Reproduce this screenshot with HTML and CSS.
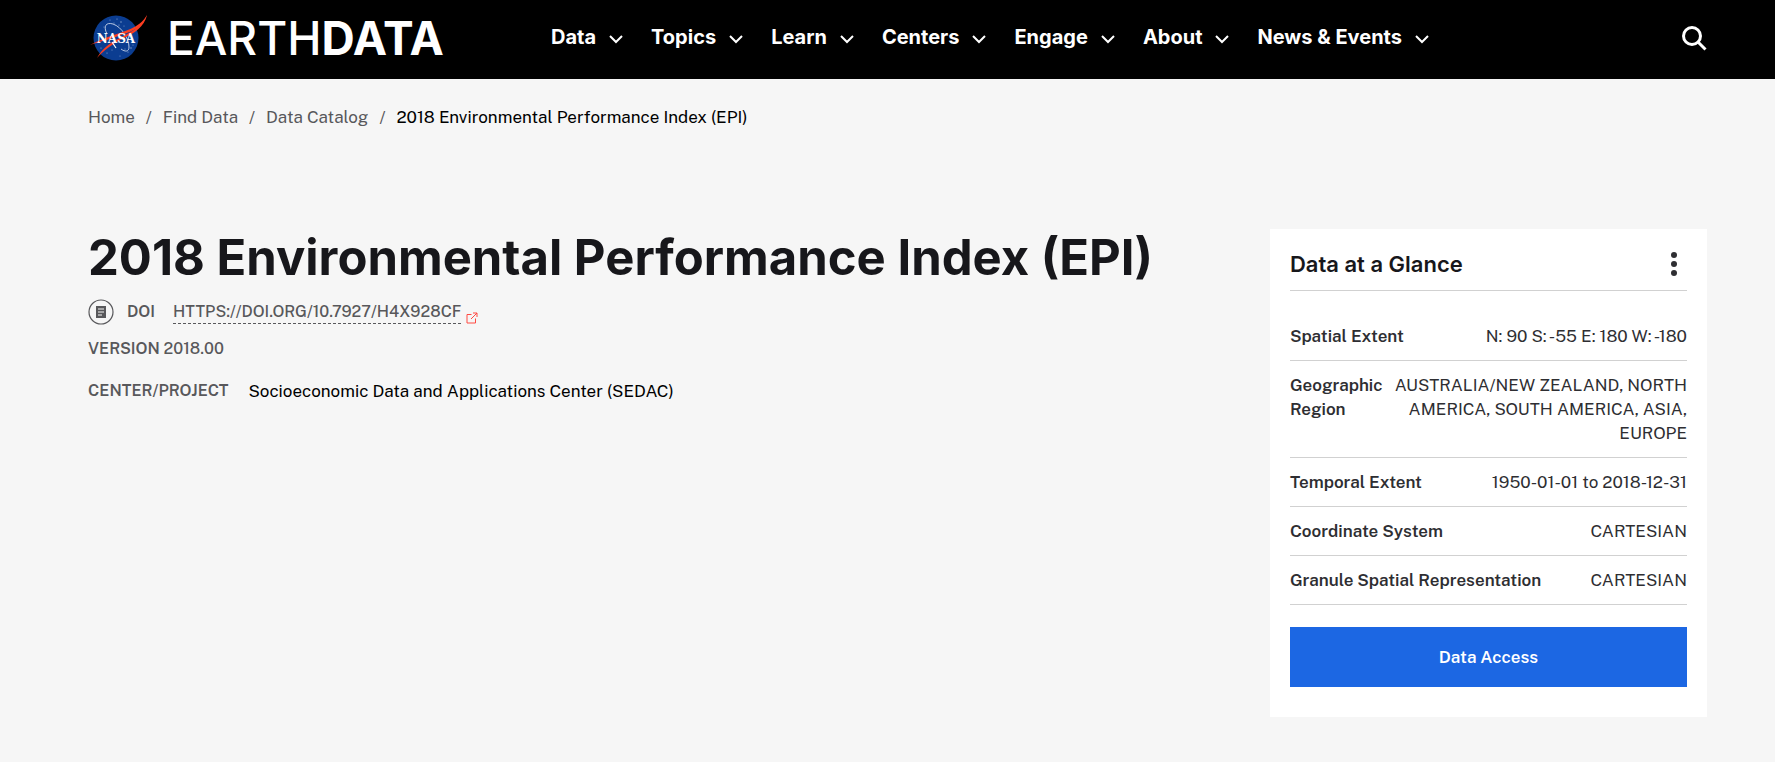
FILE: index.html
```html
<!DOCTYPE html>
<html lang="en">
<head>
  <meta charset="UTF-8">
  <meta name="viewport" content="width=device-width, initial-scale=1.0">
  <title>2018 Environmental Performance Index (EPI) | Earthdata</title>
  <link rel="stylesheet" href="styles.css">
</head>
<body>

<header class="site-header">
  <a class="brand" href="#" aria-label="NASA Earthdata home">
    <svg class="nasa-logo" viewBox="0 0 58 46" aria-hidden="true">
      <circle cx="26" cy="23" r="22.5" fill="#0b3d91"/>
      <g fill="#8fa9d6">
        <circle cx="27" cy="4" r=".6"/><circle cx="31" cy="7" r=".7"/><circle cx="24" cy="8" r=".5"/>
        <circle cx="29" cy="10" r=".6"/><circle cx="34" cy="11" r=".5"/><circle cx="20" cy="5" r=".5"/>
        <circle cx="11" cy="33" r=".6"/><circle cx="17" cy="38" r=".6"/><circle cx="41" cy="33" r=".7"/>
        <circle cx="38" cy="37" r=".6"/><circle cx="43" cy="30" r=".5"/><circle cx="30" cy="41" r=".5"/>
        <circle cx="35" cy="34" r=".5"/><circle cx="22" cy="35" r=".5"/><circle cx="14" cy="12" r=".5"/>
      </g>
      <path d="M17 19C13 11 16 7 23 9C32 12 39 24 39 32C39 37 35 37 31 34" fill="none" stroke="#dfe7f5" stroke-width=".8"/>
      <path d="M57 0C52 12 38 19 24 26C16 31 11 36 7 43C14 35 24 28 32 24C45 18 54 12 57 0Z" fill="#fc3d21"/>
      <path d="M57 0C49 14 34 16 18 22C11 25 5 27 0 30C9 27 21 24 31 20C44 16 54 11 57 0Z" fill="#fc3d21"/>
      <text class="nasa-text" x="26" y="28" text-anchor="middle">NASA</text>
      <path d="M22 27L26 33" stroke="#fff" stroke-width="1.2"/>
    </svg>
    <span class="brand-name">EARTH<b>DATA</b></span>
  </a>

  <nav class="main-nav" aria-label="Main">
    <button type="button">Data <svg class="chevron" viewBox="0 0 14 9"><path d="M1 1l6 6 6-6"/></svg></button>
    <button type="button">Topics <svg class="chevron" viewBox="0 0 14 9"><path d="M1 1l6 6 6-6"/></svg></button>
    <button type="button">Learn <svg class="chevron" viewBox="0 0 14 9"><path d="M1 1l6 6 6-6"/></svg></button>
    <button type="button">Centers <svg class="chevron" viewBox="0 0 14 9"><path d="M1 1l6 6 6-6"/></svg></button>
    <button type="button">Engage <svg class="chevron" viewBox="0 0 14 9"><path d="M1 1l6 6 6-6"/></svg></button>
    <button type="button">About <svg class="chevron" viewBox="0 0 14 9"><path d="M1 1l6 6 6-6"/></svg></button>
    <button type="button">News &amp; Events <svg class="chevron" viewBox="0 0 14 9"><path d="M1 1l6 6 6-6"/></svg></button>
  </nav>

  <button class="search-btn" type="button" aria-label="Search">
    <svg viewBox="0 0 25 25"><circle cx="10" cy="10" r="8.5"/><path d="M16 16l7.500 7.500"/></svg>
  </button>
</header>

<nav class="breadcrumb" aria-label="Breadcrumb">
  <ol>
    <li><a href="#">Home</a></li>
    <li><a href="#">Find Data</a></li>
    <li><a href="#">Data Catalog</a></li>
    <li aria-current="page">2018 Environmental Performance Index (EPI)</li>
  </ol>
</nav>

<main class="content">
  <section class="dataset">
    <h1>2018 Environmental Performance Index (EPI)</h1>

    <div class="doi">
      <svg class="doi-icon" viewBox="0 0 26 26" aria-hidden="true">
        <circle cx="13" cy="13" r="12" fill="none" stroke="#58585b" stroke-width="1.2"/>
        <path d="M8 7h10v12H8z" fill="#58585b"/>
        <path d="M10 10h6M10 13h6M10 16h4" stroke="#f6f6f6"/>
      </svg>
      <span class="label">DOI</span>
      <a class="doi-link" href="#">
        <span class="doi-url">HTTPS://DOI.ORG/10.7927/H4X928CF</span>
        <svg class="external" viewBox="0 0 12 12" aria-hidden="true"><path d="M5.500 2.500H1v8.500h8.500V6.500M7 1h4v4M11 1L5 7"/></svg>
      </a>
    </div>

    <p class="version"><span class="label">VERSION</span> 2018.00</p>

    <div class="center-project">
      <span class="label">CENTER/PROJECT</span>
      <span class="center-name">Socioeconomic Data and Applications Center (SEDAC)</span>
    </div>
  </section>

  <aside class="glance">
    <div class="glance-header">
      <h2>Data at a Glance</h2>
      <button class="more-btn" type="button" aria-label="More options">
        <svg viewBox="0 0 6 24"><circle cx="3" cy="3" r="3"/><circle cx="3" cy="12" r="3"/><circle cx="3" cy="21" r="3"/></svg>
      </button>
    </div>

    <dl>
      <div class="row"><dt>Spatial Extent</dt><dd>N: 90 S: -55 E: 180 W: -180</dd></div>
      <div class="row"><dt>Geographic Region</dt><dd>AUSTRALIA/NEW ZEALAND, NORTH AMERICA, SOUTH AMERICA, ASIA, EUROPE</dd></div>
      <div class="row"><dt>Temporal Extent</dt><dd>1950-01-01 to 2018-12-31</dd></div>
      <div class="row"><dt>Coordinate System</dt><dd>CARTESIAN</dd></div>
      <div class="row"><dt>Granule Spatial Representation</dt><dd>CARTESIAN</dd></div>
    </dl>

    <a class="access-btn" href="#">Data Access</a>
  </aside>
</main>

</body>
</html>
```
FILE: styles.css
```css
:root {
  --page-bg: #f6f6f6;
  --ink: #17171b;
  --ink-soft: #2e2e32;
  --muted: #58585b;
  --line: #d1d1d1;
  --blue: #1c67e3;
  --red: #ff4a42;
  --font: 'Public Sans', Inter, sans-serif;
  --font-heading: Inter, sans-serif;
}

* {
  box-sizing: border-box;
  margin: 0;
  padding: 0;
}

body {
  background: var(--page-bg);
  color: #000;
  font-family: var(--font);
  font-size: 17px;
  line-height: 24px;
}

a {
  color: inherit;
  text-decoration: none;
}

button {
  background: none;
  border: none;
  color: inherit;
  font-family: inherit;
  cursor: pointer;
}

svg {
  display: block;
  flex: none;
}

/* Header */
.site-header {
  display: flex;
  align-items: center;
  background: #000;
  color: #fff;
  padding: 12px 68px 15px 90px;
}

.brand {
  display: flex;
  align-items: center;
  gap: 19px;
  margin-right: 107px;
}

.nasa-logo {
  width: 58px;
  height: 46px;
}

.nasa-text {
  fill: #fff;
  font: bold 12px 'DejaVu Serif', serif;
}

.brand-name {
  font-family: var(--font-heading);
  font-size: 46px;
  font-weight: 500;
  line-height: 52px;
}

.brand-name b {
  font-weight: 700;
}

.main-nav {
  display: flex;
  gap: 28px;
  margin-bottom: 2px;
}

.main-nav button {
  display: flex;
  align-items: center;
  gap: 13px;
  font: 700 20px/24px var(--font-heading);
  white-space: nowrap;
}

.chevron {
  width: 14px;
  height: 9px;
  margin-top: 5px;
  fill: none;
  stroke: #fff;
  stroke-width: 2;
}

.search-btn {
  margin-left: auto;
}

.search-btn svg {
  width: 25px;
  height: 25px;
  fill: none;
  stroke: #fff;
  stroke-width: 3;
}

/* Breadcrumb */
.breadcrumb {
  padding: 26px 68px 0 88px;
}

.breadcrumb ol {
  display: flex;
  list-style: none;
  color: var(--muted);
}

.breadcrumb li + li::before {
  content: "/";
  padding: 0 11px;
  color: var(--muted);
}

.breadcrumb [aria-current] {
  color: #000;
}

/* Dataset */
.content {
  display: flex;
  justify-content: space-between;
  align-items: flex-start;
  gap: 60px;
  padding: 100px 68px 44px 88px;
}

.dataset {
  flex: 1;
}

h1 {
  color: var(--ink);
  font: 700 49px/58px var(--font-heading);
}

.label {
  color: var(--muted);
  font-size: 16px;
  font-weight: 600;
}

.doi {
  display: flex;
  align-items: center;
  margin-top: 12px;
}

.doi-icon {
  width: 26px;
  height: 26px;
  margin-right: 13px;
}

.doi-link {
  display: flex;
  align-items: flex-end;
  gap: 5px;
  margin-left: 18px;
  color: var(--muted);
  font-size: 16px;
  font-weight: 500;
}

.doi-url {
  border-bottom: 1px dashed var(--muted);
  line-height: 22px;
}

.external {
  width: 12px;
  height: 12px;
  fill: none;
  stroke: var(--red);
}

.version {
  margin-top: 12px;
  color: var(--muted);
  font-size: 16px;
  font-weight: 500;
}

.center-project {
  display: flex;
  align-items: center;
  gap: 20px;
  margin-top: 18px;
}

/* Data at a Glance card */
.glance {
  flex: none;
  width: 27%;
  background: #fff;
  color: var(--ink-soft);
  padding: 21px 20px 30px;
}

.glance-header {
  display: flex;
  justify-content: space-between;
  align-items: center;
  border-bottom: 1px solid var(--line);
  padding-bottom: 12px;
  margin-bottom: 21px;
}

h2 {
  color: var(--ink);
  font: 600 22px/28px var(--font-heading);
}

.more-btn {
  padding: 0 10px;
}

.more-btn svg {
  width: 6px;
  height: 24px;
  fill: var(--ink-soft);
}

.row {
  display: flex;
  justify-content: space-between;
  gap: 12px;
  padding: 12px 0;
  border-bottom: 1px solid var(--line);
}

dt {
  font-weight: 600;
}

dd {
  text-align: right;
}

.access-btn {
  display: block;
  margin-top: 22px;
  padding: 18px;
  background: var(--blue);
  color: #fff;
  font-weight: 600;
  text-align: center;
}
```
